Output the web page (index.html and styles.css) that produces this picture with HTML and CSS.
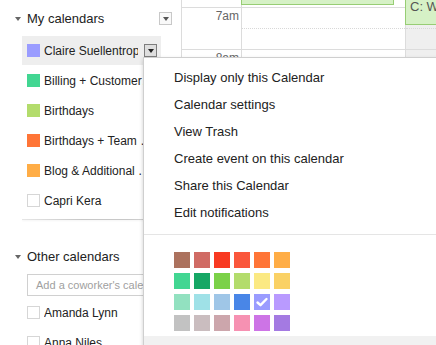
FILE: index.html
```html
<!DOCTYPE html>
<html>
<head>
<meta charset="utf-8">
<link rel="stylesheet" href="styles.css">
</head>
<body>
<div class="app">
  <aside class="sidebar">
    <div class="sec-head">
      <span class="caret"></span><span class="sec-title">My calendars</span><span class="dd dd-light"></span>
    </div>
    <ul class="cal-list">
      <li class="cal active"><span class="sw" style="background:#9a9cff"></span><span class="name name-clip">Claire Suellentrop</span><span class="dd dd-dark"></span></li>
      <li class="cal"><span class="sw" style="background:#42d692"></span><span class="name">Billing + Customer Success</span></li>
      <li class="cal"><span class="sw" style="background:#b3dc6c"></span><span class="name">Birthdays</span></li>
      <li class="cal"><span class="sw" style="background:#ff7537"></span><span class="name">Birthdays + Team Events</span></li>
      <li class="cal"><span class="sw" style="background:#ffad46"></span><span class="name">Blog &amp; Additional Content</span></li>
      <li class="cal"><span class="sw sw-empty"></span><span class="name">Capri Kera</span></li>
    </ul>
    <div class="divider"></div>
    <div class="sec-head sec-other">
      <span class="caret"></span><span class="sec-title">Other calendars</span>
    </div>
    <div class="add-box">Add a coworker's calendar</div>
    <ul class="cal-list">
      <li class="cal"><span class="sw sw-empty"></span><span class="name">Amanda Lynn</span></li>
      <li class="cal"><span class="sw sw-empty"></span><span class="name">Anna Niles</span></li>
    </ul>
  </aside>

  <main class="grid">
    <div class="row row-top">
      <div class="tcol"></div>
      <div class="day d1"><div class="event e1"></div></div>
      <div class="day d2"><div class="event e2">C: Weekly sync</div></div>
    </div>
    <div class="row row-hour">
      <div class="tcol"><span class="tlabel">7am</span></div>
      <div class="day d1"><div class="half"></div></div>
      <div class="day d2"><div class="half"></div></div>
    </div>
    <div class="row row-hour">
      <div class="tcol"><span class="tlabel">8am</span></div>
      <div class="day d1"><div class="half"></div></div>
      <div class="day d2"><div class="half"></div></div>
    </div>
    <div class="row row-hour">
      <div class="tcol"><span class="tlabel">9am</span></div>
      <div class="day d1"><div class="half"></div></div>
      <div class="day d2"><div class="half"></div></div>
    </div>
  </main>

  <div class="menu">
    <ul class="menu-list">
      <li class="mi">Display only this Calendar</li>
      <li class="mi">Calendar settings</li>
      <li class="mi">View Trash</li>
      <li class="mi">Create event on this calendar</li>
      <li class="mi">Share this Calendar</li>
      <li class="mi">Edit notifications</li>
    </ul>
    <div class="sep"></div>
    <div class="palette">
      <span class="pc" style="background:#ac725e"></span>
      <span class="pc" style="background:#d06b64"></span>
      <span class="pc" style="background:#f83a22"></span>
      <span class="pc" style="background:#fa573c"></span>
      <span class="pc" style="background:#ff7537"></span>
      <span class="pc" style="background:#ffad46"></span>
      <span class="pc" style="background:#42d692"></span>
      <span class="pc" style="background:#16a765"></span>
      <span class="pc" style="background:#7bd148"></span>
      <span class="pc" style="background:#b3dc6c"></span>
      <span class="pc" style="background:#fbe983"></span>
      <span class="pc" style="background:#fad165"></span>
      <span class="pc" style="background:#92e1c0"></span>
      <span class="pc" style="background:#9fe1e7"></span>
      <span class="pc" style="background:#9fc6e7"></span>
      <span class="pc" style="background:#4986e7"></span>
      <span class="pc pc-checked" style="background:#9a9cff"><svg class="check" viewBox="0 0 16 16" width="16" height="16"><polyline points="3.5,8.5 6.5,11.2 12.5,5" fill="none" stroke="#fff" stroke-width="2.4" stroke-linecap="round" stroke-linejoin="round"/></svg></span>
      <span class="pc" style="background:#b99aff"></span>
      <span class="pc" style="background:#c2c2c2"></span>
      <span class="pc" style="background:#cabdbf"></span>
      <span class="pc" style="background:#cca6ac"></span>
      <span class="pc" style="background:#f691b2"></span>
      <span class="pc" style="background:#cd74e6"></span>
      <span class="pc" style="background:#a47ae2"></span>
    </div>
    <div class="mi mi-custom">Choose custom color</div>
  </div>
</div>
</body>
</html>
```

FILE: styles.css
```css
html, body {
  margin: 0;
  padding: 0;
  background: #fff;
}
body {
  width: 436px;
  height: 345px;
  overflow: hidden;
  font-family: "Liberation Sans", Arial, sans-serif;
  font-size: 13px;
  color: #222;
}
ul { list-style: none; margin: 0; padding: 0; }

.app {
  position: relative;
  display: flex;
  width: 436px;
  height: 345px;
  overflow: hidden;
}

/* ---------- sidebar ---------- */
.sidebar {
  width: 181px;
  flex: none;
  background: #fff;
}
.sec-head {
  display: flex;
  align-items: center;
  height: 36px;
  padding-left: 15px;
  box-sizing: border-box;
}
.caret {
  width: 0;
  height: 0;
  border-left: 3px solid transparent;
  border-right: 3px solid transparent;
  border-top: 4px solid #666;
  margin-right: 6px;
  margin-top: 1px;
}
.sec-title {
  color: #222;
  font-size: 13px;
}
.dd {
  box-sizing: border-box;
  display: flex;
  align-items: center;
  justify-content: center;
  flex: none;
}
.dd::after {
  content: "";
  width: 0;
  height: 0;
  border-left: 3.5px solid transparent;
  border-right: 3.5px solid transparent;
  border-top: 4px solid #555;
}
.dd-light {
  width: 13px;
  height: 13px;
  margin-left: auto;
  margin-right: 9px;
  margin-top: 1px;
  border: 1px solid #c8c8c8;
  background: #f9f9f9;
}
.dd-dark {
  width: 13px;
  height: 13px;
  margin-left: auto;
  margin-right: 4px;
  border: 1px solid #7d7d7d;
  background: #dedede;
}
.dd-dark::after { border-top-color: #222; }

.cal {
  display: flex;
  align-items: center;
  margin-left: 22px;
  width: 139px;
  height: 29px;
  margin-bottom: 1px;
  padding-left: 5px;
  box-sizing: border-box;
  white-space: nowrap;
}
.cal.active { background: #eeeeee; }
.sw {
  width: 13px;
  height: 13px;
  flex: none;
  margin-right: 4px;
  box-sizing: border-box;
}
.sw-empty {
  background: #fff;
  border: 1px solid #d6d6d6;
}
.name {
  color: #222;
  font-size: 12px;
  white-space: nowrap;
  overflow: hidden;
  text-overflow: ellipsis;
  width: 111px;
  flex: none;
}
.name-clip {
  width: 94px;
  text-overflow: clip;
}

.divider {
  margin: 4px 0 0 22px;
  width: 150px;
  height: 1px;
  background: linear-gradient(to right, #e6e6e6, #c8c8c8 40%, #c8c8c8 70%, #e0e0e0);
  box-shadow: 0 1px 2px rgba(0,0,0,0.06);
}
.sec-other {
  margin-top: 20px;
  height: 32px;
}
.add-box {
  margin: 2px 0 2px 27px;
  width: 150px;
  height: 22px;
  box-sizing: border-box;
  border: 1px solid #d0d0d0;
  padding-left: 8px;
  line-height: 20px;
  font-size: 11px;
  color: #a0a0a0;
  white-space: nowrap;
  overflow: hidden;
}

/* ---------- calendar grid ---------- */
.grid {
  flex: 1;
  border-left: 1px solid #dcdcdc;
  min-width: 0;
}
.row {
  display: flex;
  border-bottom: 1px solid #dcdcdc;
  box-sizing: content-box;
}
.row-top { height: 7px; }
.row-hour { height: 41px; }
.tcol {
  width: 59px;
  flex: none;
  border-right: 1px solid #dcdcdc;
  text-align: right;
  box-sizing: content-box;
}
.tlabel {
  display: block;
  padding-right: 2px;
  padding-top: 1px;
  font-size: 12px;
  line-height: 14px;
  color: #666;
}
.day {
  position: relative;
  box-sizing: content-box;
}
.d1 {
  width: 163px;
  flex: none;
  border-right: 1px solid #dcdcdc;
}
.d2 {
  flex: 1;
  background: #efefef;
}
.half {
  height: 20px;
  border-bottom: 1px dotted #d8d8d8;
}
.event {
  position: absolute;
  box-sizing: border-box;
  background: #d6f1c6;
  border: 1px solid #97cd74;
  z-index: 1;
}
.e1 {
  left: -1px;
  top: -20px;
  width: 153px;
  height: 25px;
}
.e2 {
  left: -1px;
  top: -8px;
  width: 60px;
  height: 33px;
  padding: 6px 0 0 4px;
  line-height: 15px;
  color: #555;
  font-size: 13px;
  white-space: nowrap;
  overflow: hidden;
}

/* ---------- popup menu ---------- */
.menu {
  position: absolute;
  left: 143px;
  top: 57px;
  width: 330px;
  height: 320px;
  background: #fff;
  border: 1px solid #cfcfcf;
  box-shadow: 0 2px 4px rgba(0,0,0,0.2);
  z-index: 5;
  padding-top: 6px;
  box-sizing: border-box;
}
.mi {
  height: 27px;
  line-height: 27px;
  padding-left: 30px;
  color: #222;
  white-space: nowrap;
}
.sep {
  margin-top: 8px;
  height: 1px;
  background: #e5e5e5;
}
.palette {
  display: grid;
  grid-template-columns: repeat(6, 16px);
  grid-auto-rows: 16px;
  column-gap: 4px;
  row-gap: 5px;
  padding: 17px 0 0 30px;
}
.pc {
  display: block;
  width: 16px;
  height: 16px;
}
.check { display: block; }
.mi-custom {
  margin-top: 5px;
  background: #f1f1f1;
}
```
